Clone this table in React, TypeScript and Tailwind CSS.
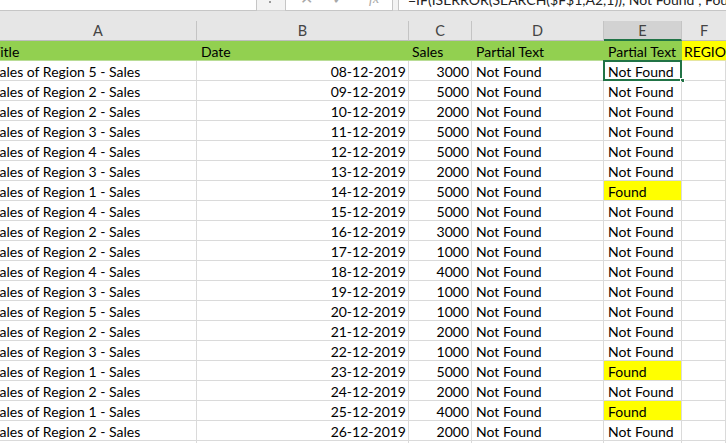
import React from "react";

type Row = { r: number; d: string; s: number; found?: boolean };

const rows: Row[] = [
  { r: 5, d: "08-12-2019", s: 3000 },
  { r: 2, d: "09-12-2019", s: 5000 },
  { r: 2, d: "10-12-2019", s: 2000 },
  { r: 3, d: "11-12-2019", s: 5000 },
  { r: 4, d: "12-12-2019", s: 5000 },
  { r: 3, d: "13-12-2019", s: 2000 },
  { r: 1, d: "14-12-2019", s: 5000, found: true },
  { r: 4, d: "15-12-2019", s: 5000 },
  { r: 2, d: "16-12-2019", s: 3000 },
  { r: 2, d: "17-12-2019", s: 1000 },
  { r: 4, d: "18-12-2019", s: 4000 },
  { r: 3, d: "19-12-2019", s: 1000 },
  { r: 5, d: "20-12-2019", s: 1000 },
  { r: 2, d: "21-12-2019", s: 2000 },
  { r: 3, d: "22-12-2019", s: 1000 },
  { r: 1, d: "23-12-2019", s: 5000, found: true },
  { r: 2, d: "24-12-2019", s: 2000 },
  { r: 1, d: "25-12-2019", s: 4000, found: true },
  { r: 2, d: "26-12-2019", s: 2000 },
];

const grid = "grid grid-cols-[197px_212px_63px_132px_78px_44px]";
const cell = "h-[20px] border-r border-b border-[#dadada] leading-[21px] whitespace-nowrap overflow-hidden";
const green = "h-[20px] bg-[#92d050] border-b border-[#b9dd96] leading-[21px] whitespace-nowrap overflow-hidden";

export default function App() {
  return (
    <div className="w-[726px] h-[443px] overflow-hidden bg-white text-[14px] text-black" style={{ fontFamily: "Lato, 'Open Sans', sans-serif" }}>
      {/* formula bar */}
      <div className="h-[11px] flex bg-[#f3f3f3] overflow-hidden">
        <div className="w-[257px] h-[11px] bg-white border-r border-b border-[#c6c6c6]" />
        <div className="w-[28px] h-[11px] border-b border-[#d4d4d4] relative">
          <div className="absolute left-[12px] top-[1px] w-[2px] h-[2px] bg-[#9a9a9a]" />
        </div>
        <div className="w-[108px] h-[11px] bg-white border-l border-r border-b border-[#c6c6c6] relative overflow-hidden text-[#a8a8a8]">
          <span className="absolute left-[14px] top-[-12px] text-[16px] leading-[20px]">✕</span>
          <span className="absolute left-[46px] top-[-12px] text-[16px] leading-[20px]">✓</span>
          <span className="absolute left-[83px] top-[-11px] text-[14px] leading-[20px] italic" style={{ fontFamily: "'Liberation Serif', serif" }}>fx</span>
        </div>
        <div className="w-[5px] h-[11px] border-b border-[#d4d4d4]" />
        <div className="flex-1 h-[11px] bg-white border-l border-b border-[#c6c6c6] overflow-hidden pl-[9px]">
          <div className="mt-[-10px] leading-[20px] whitespace-nowrap text-[#222]">=IF(ISERROR(SEARCH($F$1,A2,1)),"Not Found","Found")</div>
        </div>
      </div>
      {/* band */}
      <div className="h-[10px] bg-[#e6e6e6]" />
      {/* column headers */}
      <div className={`${grid} h-[20px] bg-[#e6e6e6] text-[#444] text-[14.5px]`}>
        {["A", "B", "C", "D"].map((l) => (
          <div key={l} className="h-[20px] border-r border-b border-[#c4c4c4] border-b-[#bdbdbd] text-center leading-[20px]">{l}</div>
        ))}
        <div className="h-[20px] border-r border-[#c4c4c4] bg-[#d2d2d2] border-b-2 border-b-[#217346] text-center leading-[20px]">E</div>
        <div className="h-[20px] border-b border-[#bdbdbd] text-center leading-[20px]">F</div>
      </div>
      {/* header data row */}
      <div className={`${grid} h-[20px]`}>
        <div className={green}><span className="ml-[-8px]">Title</span></div>
        <div className={`${green} pl-[4px]`}>Date</div>
        <div className={`${green} pl-[3px]`}>Sales</div>
        <div className={`${green} pl-[4px]`}>Partial Text</div>
        <div className={`${green} pl-[4px]`}>Partial Text</div>
        <div className="h-[20px] bg-[#ffff00] border-b border-[#e6e6a0] leading-[21px] pl-[2px] whitespace-nowrap overflow-hidden">REGION</div>
      </div>
      {/* data rows */}
      {rows.map((row, i) => (
        <div key={i} className={`${grid} h-[20px]`}>
          <div className={cell}><span className="ml-[-8px]">Sales of Region {row.r} - Sales</span></div>
          <div className={`${cell} text-right pr-[2px]`}>{row.d}</div>
          <div className={`${cell} text-right pr-[2px]`}>{row.s}</div>
          <div className={`${cell} pl-[4px]`}>Not Found</div>
          <div className={`${cell} pl-[4px] relative overflow-visible ${row.found ? "bg-[#ffff00]" : ""}`}>
            {row.found ? "Found" : "Not Found"}
            {i === 0 && (
              <>
                <div className="absolute left-[-1px] top-[-1px] w-[79px] h-[21px] border-2 border-[#217346]" />
                <div className="absolute right-[-4px] bottom-[-3px] w-[5px] h-[5px] bg-[#217346] border border-white" />
              </>
            )}
          </div>
          <div className={cell} />
        </div>
      ))}
      <div className={`${grid} h-[20px]`}>
        <div className={cell}><span className="ml-[-8px]">Sales of Region 4 - Sales</span></div>
        <div className={`${cell} text-right pr-[2px]`}>27-12-2019</div>
        <div className={`${cell} text-right pr-[2px]`}>3000</div>
        <div className={`${cell} pl-[4px]`}>Not Found</div>
        <div className={`${cell} pl-[4px]`}>Not Found</div>
        <div className={cell} />
      </div>
    </div>
  );
}
